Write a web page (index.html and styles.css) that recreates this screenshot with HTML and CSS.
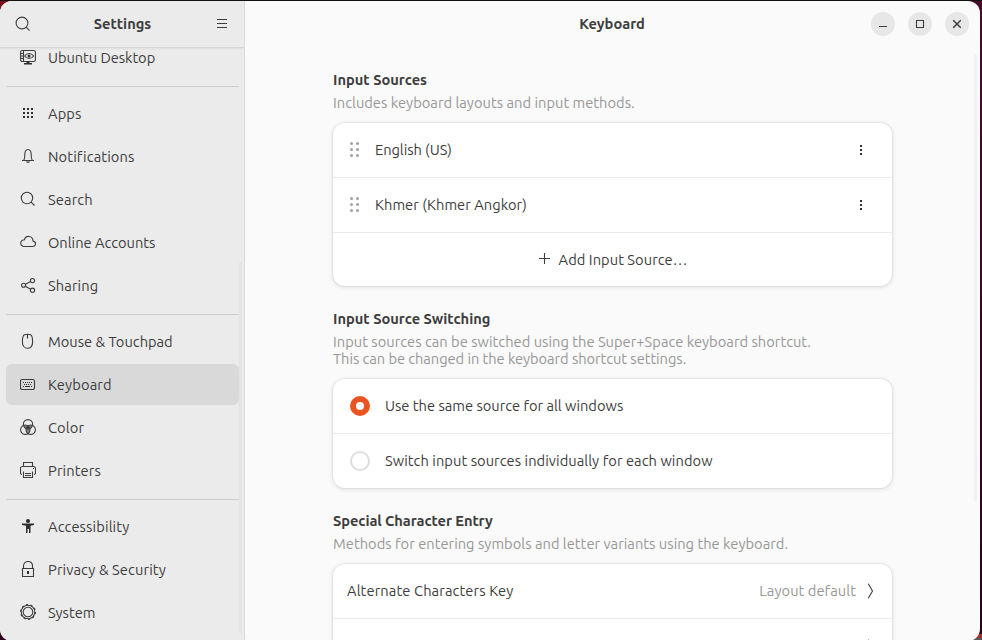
FILE: index.html
```html
<!DOCTYPE html>
<html lang="en">
<head>
<meta charset="utf-8">
<title>Settings</title>
<link rel="stylesheet" href="styles.css">
</head>
<body>
<div class="window">
  <aside class="sidebar">
    <header class="side-head">
      <svg class="icon" viewBox="0 0 16 16"><circle cx="7" cy="7" r="5.9"/><path d="M11.2 11.2 14.6 14.6"/></svg>
      <h1>Settings</h1>
      <svg class="icon menu" viewBox="0 0 16 16"><path d="M3 3.5h10M3 7.5h10M3 11.5h10"/></svg>
    </header>
    <nav class="nav">
      <a class="item tight"><svg class="icon" viewBox="0 0 16 16"><rect x=".6" y="1.500" width="14.800" height="11" rx="1.600"/><path d="M3.500 2v10.500M.6 4.500h2.900M.6 7h2.900M.6 9.500h2.900"/><path d="M4.600 7c2.400-3.400 6.600-3.400 9 0-2.400 3.300-6.600 3.300-9 0z"/><circle cx="9" cy="6.900" r="1.500" class="solid"/><path class="solid" d="M6.500 12.500h3V14H12v1.500H4V14h2.500z"/></svg><span>Ubuntu Desktop</span></a>
      <hr>
      <a class="item wide"><svg class="icon" viewBox="0 0 16 16"><path class="solid" d="M3 3h2v2H3zM7 3h2v2H7zM11 3h2v2h-2zM3 7h2v2H3zM7 7h2v2H7zM11 7h2v2h-2zM3 11h2v2H3zM7 11h2v2H7zM11 11h2v2h-2z"/></svg><span>Apps</span></a>
      <a class="item wide"><svg class="icon" viewBox="0 0 16 16"><path d="M2 12.500h12M3.800 12.300c.9-1.600 1-2.700 1-5.300 0-3.500.8-5.500 3.200-5.500s3.200 2 3.200 5.500c0 2.600.1 3.700 1 5.300"/><path class="solid" d="M6 13.500h4c-.3 1.800-3.700 1.800-4 0z"/></svg><span>Notifications</span></a>
      <a class="item wide"><svg class="icon" viewBox="0 0 16 16"><circle cx="7" cy="7" r="5.700"/><path d="M11.100 11.100 14.500 14.500"/></svg><span>Search</span></a>
      <a class="item"><svg class="icon" viewBox="0 0 16 16"><path d="M3.800 12.500h8.700c4 0 4-5 .6-5.400C12.700 1.100 5.500 1.100 4.500 5.700.1 5.500-.8 12 3.800 12.500z"/></svg><span>Online Accounts</span></a>
      <a class="item wide"><svg class="icon" viewBox="0 0 16 16"><circle cx="3.600" cy="8.200" r="2"/><circle cx="12.500" cy="3.600" r="2.100"/><circle cx="12.500" cy="13.200" r="2.100"/><path d="M5.400 7.300l5.200-2.700M5.300 9.200l5.400 3"/></svg><span>Sharing</span></a>
      <hr>
      <a class="item"><svg class="icon" viewBox="0 0 16 16"><path d="M4.400 1.700c1.600-.4 4.600-.4 6.200 0 1.400.6 2 4.300 2 7 0 4-2 6.600-5.100 6.600s-5.100-2.600-5.100-6.600c0-2.700.6-6.400 2-7zM7.500 1.500v4"/></svg><span>Mouse &amp; Touchpad</span></a>
      <a class="item wide active"><svg class="icon" viewBox="0 0 16 16"><rect x=".5" y="3.500" width="14" height="10" rx="1.700"/><path class="solid" d="M3 6h1v1H3zM5 6h1v1H5zM7 6h1v1H7zM9 6h1v1H9zM11 6h1v1h-1zM4 8h1v1H4zM6 8h1v1H6zM8 8h1v1H8zM10 8h1v1h-1zM3 10h1v1H3zM5 10h5v1H5zM11 10h1v1h-1z"/></svg><span>Keyboard</span></a>
      <a class="item wide"><svg class="icon" viewBox="0 0 16 16"><clipPath id="top"><circle cx="8" cy="5.300" r="4.700"/></clipPath><clipPath id="left"><circle cx="5.300" cy="10.700" r="4.700"/></clipPath><g class="mix"><circle cx="5.300" cy="10.700" r="4.700" clip-path="url(#top)"/><circle cx="10.700" cy="10.700" r="4.700" clip-path="url(#top)"/><circle cx="10.700" cy="10.700" r="4.700" clip-path="url(#left)"/></g><circle cx="8" cy="5.300" r="4.700"/><circle cx="5.300" cy="10.700" r="4.700"/><circle cx="10.700" cy="10.700" r="4.700"/></svg><span>Color</span></a>
      <a class="item wide"><svg class="icon" viewBox="0 0 16 16"><path d="M3.500 4.500v-4h9v4M2 12.500c-1 0-1.500-.5-1.500-1.500V6.500c0-1.300.7-2 2-2h11c1.300 0 2 .7 2 2V11c0 1-.5 1.500-1.500 1.500M3.500 9.500v6h9v-6M5 11.500h6M5 13.500h6"/><path class="solid" d="M13 6h1v1h-1z"/></svg><span>Printers</span></a>
      <hr>
      <a class="item wide"><svg class="icon" viewBox="0 0 16 16"><circle class="solid" cx="8" cy="3" r="2.100"/><path class="solid" d="M2 5.500h12V7L10.500 7.800V15H9v-4H7.500v4H6V7.800L2 7z"/></svg><span>Accessibility</span></a>
      <a class="item wide"><svg class="icon" viewBox="0 0 16 16"><path d="M2.500 7.500h11v8h-11zM3.500 7.500V5c0-6 9-6 9 0v2.500"/><path class="solid" d="M7 10h2v3H7z"/></svg><span>Privacy &amp; Security</span></a>
      <a class="item"><svg class="icon" viewBox="0 0 16 16"><circle cx="8" cy="8" r="4.800"/><circle cx="8" cy="8" r="6.800"/><circle cx="8" cy="8" r="7.400" stroke-dasharray="2.200 2.450"/></svg><span>System</span></a>
    </nav>
    <div class="side-scroll"></div>
  </aside>
  <main class="main">
    <header class="main-head">
      <h1>Keyboard</h1>
      <div class="controls">
        <button><svg class="icon" viewBox="0 0 16 16"><path d="M4 10.500h8"/></svg></button>
        <button><svg class="icon" viewBox="0 0 16 16"><path d="M4.500 4.500h7v7h-7z"/></svg></button>
        <button><svg class="icon" viewBox="0 0 16 16"><path class="cross" d="M4.200 4.200l7.600 7.600M11.800 4.200l-7.600 7.600"/></svg></button>
      </div>
    </header>
    <div class="content">
      <section>
        <h2>Input Sources</h2>
        <p>Includes keyboard layouts and input methods.</p>
        <div class="card">
          <div class="row"><svg class="grip" viewBox="0 0 10 16"><circle cx="1.500" cy="1.500" r="1.500"/><circle cx="7.500" cy="1.500" r="1.500"/><circle cx="1.500" cy="7.500" r="1.500"/><circle cx="7.500" cy="7.500" r="1.500"/><circle cx="1.500" cy="13.500" r="1.500"/><circle cx="7.500" cy="13.500" r="1.500"/></svg><span class="tight">English (US)</span><svg class="icon more" viewBox="0 0 16 16"><path class="solid" d="M7 3h2v2H7zM7 7h2v2H7zM7 11h2v2H7z"/></svg></div>
          <div class="row"><svg class="grip" viewBox="0 0 10 16"><circle cx="1.500" cy="1.500" r="1.500"/><circle cx="7.500" cy="1.500" r="1.500"/><circle cx="1.500" cy="7.500" r="1.500"/><circle cx="7.500" cy="7.500" r="1.500"/><circle cx="1.500" cy="13.500" r="1.500"/><circle cx="7.500" cy="13.500" r="1.500"/></svg><span>Khmer (Khmer Angkor)</span><svg class="icon more" viewBox="0 0 16 16"><path class="solid" d="M7 3h2v2H7zM7 7h2v2H7zM7 11h2v2H7z"/></svg></div>
          <div class="row add"><svg class="icon" viewBox="0 0 16 16"><path d="M2 7.500h11M7.500 2v11"/></svg><span>Add Input Source…</span></div>
        </div>
      </section>
      <section>
        <h2>Input Source Switching</h2>
        <p>Input sources can be switched using the Super+Space keyboard shortcut.<br><span class="tight">This can be changed in the keyboard shortcut settings.</span></p>
        <div class="card">
          <div class="row"><i class="radio on"></i><span class="even">Use the same source for all windows</span></div>
          <div class="row"><i class="radio"></i><span>Switch input sources individually for each window</span></div>
        </div>
      </section>
      <section>
        <h2 class="snug">Special Character Entry</h2>
        <p>Methods for entering symbols and letter variants using the keyboard.</p>
        <div class="card">
          <div class="row link"><span class="wide">Alternate Characters Key</span><span class="value">Layout default</span><svg class="icon go" viewBox="0 0 16 16"><path d="M6.300.7 10.500 8l-4.200 7.300"/></svg></div>
          <div class="row link"><span>Compose Key</span><span class="value">Layout default</span><svg class="icon go" viewBox="0 0 16 16"><path d="M6.300.7 10.500 8l-4.200 7.300"/></svg></div>
        </div>
      </section>
    </div>
    <div class="main-scroll"></div>
  </main>
</div>
</body>
</html>
```
FILE: styles.css
```css
* { box-sizing: border-box; }
html, body { margin: 0; height: 640px; overflow: hidden; }
body {
  padding: 1px 2px 0 0;
  background:
    linear-gradient(#111 0 1px, transparent 1px),
    linear-gradient(90deg, #7c1018 0 20px, transparent 20px) 0 0 / 100% 20px no-repeat,
    linear-gradient(#a8322a 0 4px, #555 4px) 100% 100% / 10px 6px no-repeat,
    linear-gradient(#4a0a2c, #2c001c);
  font: 14.6667px/17px Ubuntu, "Noto Sans", sans-serif;
  font-variant-ligatures: none;
  color: #3d3d3d;
}
.window { display: flex; height: 640px; border-radius: 12px; overflow: hidden; background: #fafafa; }
.icon { width: 16px; height: 16px; flex: none; display: block; fill: none; stroke: #3d3d3d; stroke-width: 1.1; }
.solid { fill: #2f2f2f; stroke: none; }
.mix { fill: #222; fill-opacity: .5; stroke: none; }
h1, h2 { margin: 0; font-size: 14.6667px; line-height: 17px; font-weight: 700; }
span { white-space: nowrap; }

.sidebar { position: relative; width: 245px; flex: none; background: #ebebeb; border-right: 1px solid #dadada; overflow: hidden; }
.side-head { position: relative; z-index: 1; height: 47px; display: flex; align-items: center; justify-content: space-between; padding: 0 14px 1px 15px; background: #ebebeb; border-bottom: 1px solid #d5d5d5; box-shadow: 0 1px 2px rgba(0,0,0,.05); }
.nav { display: flex; flex-direction: column; gap: 2px; margin-top: -11px; padding: 0 5px 0 6px; }
.item { display: flex; align-items: center; gap: 12px; height: 41px; flex: none; padding-left: 14px; border-radius: 6px; }
.item .icon { margin-bottom: 1px; }
.item.active { background: #d9d9d9; }
.nav hr { width: 233px; height: 1px; margin: 6px 0 4px; border: 0; background: #cdcdcd; flex: none; }
.side-scroll { position: absolute; right: 2px; top: 261px; width: 3px; height: 371px; background: #e3e3e3; border-radius: 2px; }

.main { position: relative; flex: 1; min-width: 0; }
.main-head { height: 47px; display: flex; align-items: center; justify-content: center; position: relative; padding: 0 1px 2px 0; }
.controls { position: absolute; right: 11px; top: 11px; display: flex; gap: 13px; }
.controls button { width: 24px; height: 24px; padding: 4px; border: 0; border-radius: 50%; background: #e7e7e7; }
.cross { stroke-width: 1.5; }
.main-scroll { position: absolute; right: 3px; top: 53px; width: 3px; height: 447px; background: #f1f1f1; border-radius: 2px; }

.content { width: 559px; margin: 23px 0 0 88px; display: flex; flex-direction: column; gap: 24px; }
.content p { margin: 6px 0 12px; color: #979797; letter-spacing: .025px; }
.card { background: #fff; border-radius: 12px; box-shadow: 0 0 0 1px rgba(0,0,0,.045), 0 1px 4px 1px rgba(0,0,0,.09); }
.row { display: flex; align-items: center; height: 55px; padding: 0 17px; border-bottom: 1px solid #ebebeb; letter-spacing: .06px; }
.row span { padding-bottom: 1px; }
.row:last-child { height: 54px; border: 0; }
.row.add:last-child { height: 53px; justify-content: center; gap: 6px; }
.row.add span { padding: 0; }
.row.add .icon { margin: 0 0 1px -1px; }
.grip { width: 10px; height: 16px; margin-right: 15px; fill: #a3a3a3; }
.more { margin: 0 6px 0 auto; }
.radio { width: 20px; height: 20px; margin-right: 15px; border: 2px solid #dedede; border-radius: 50%; background: #fff; }
.radio.on { border: 6px solid #e95420; }
.row.link { padding: 0 14px; }
.row.link:last-child { height: 55px; }
.value { margin-left: auto; color: #979797; }
.go { margin-left: 6px; }

.even { letter-spacing: 0; }
.wide { letter-spacing: .12px; }
.tight { letter-spacing: -.05px; }
.snug { letter-spacing: -.08px; }
```
